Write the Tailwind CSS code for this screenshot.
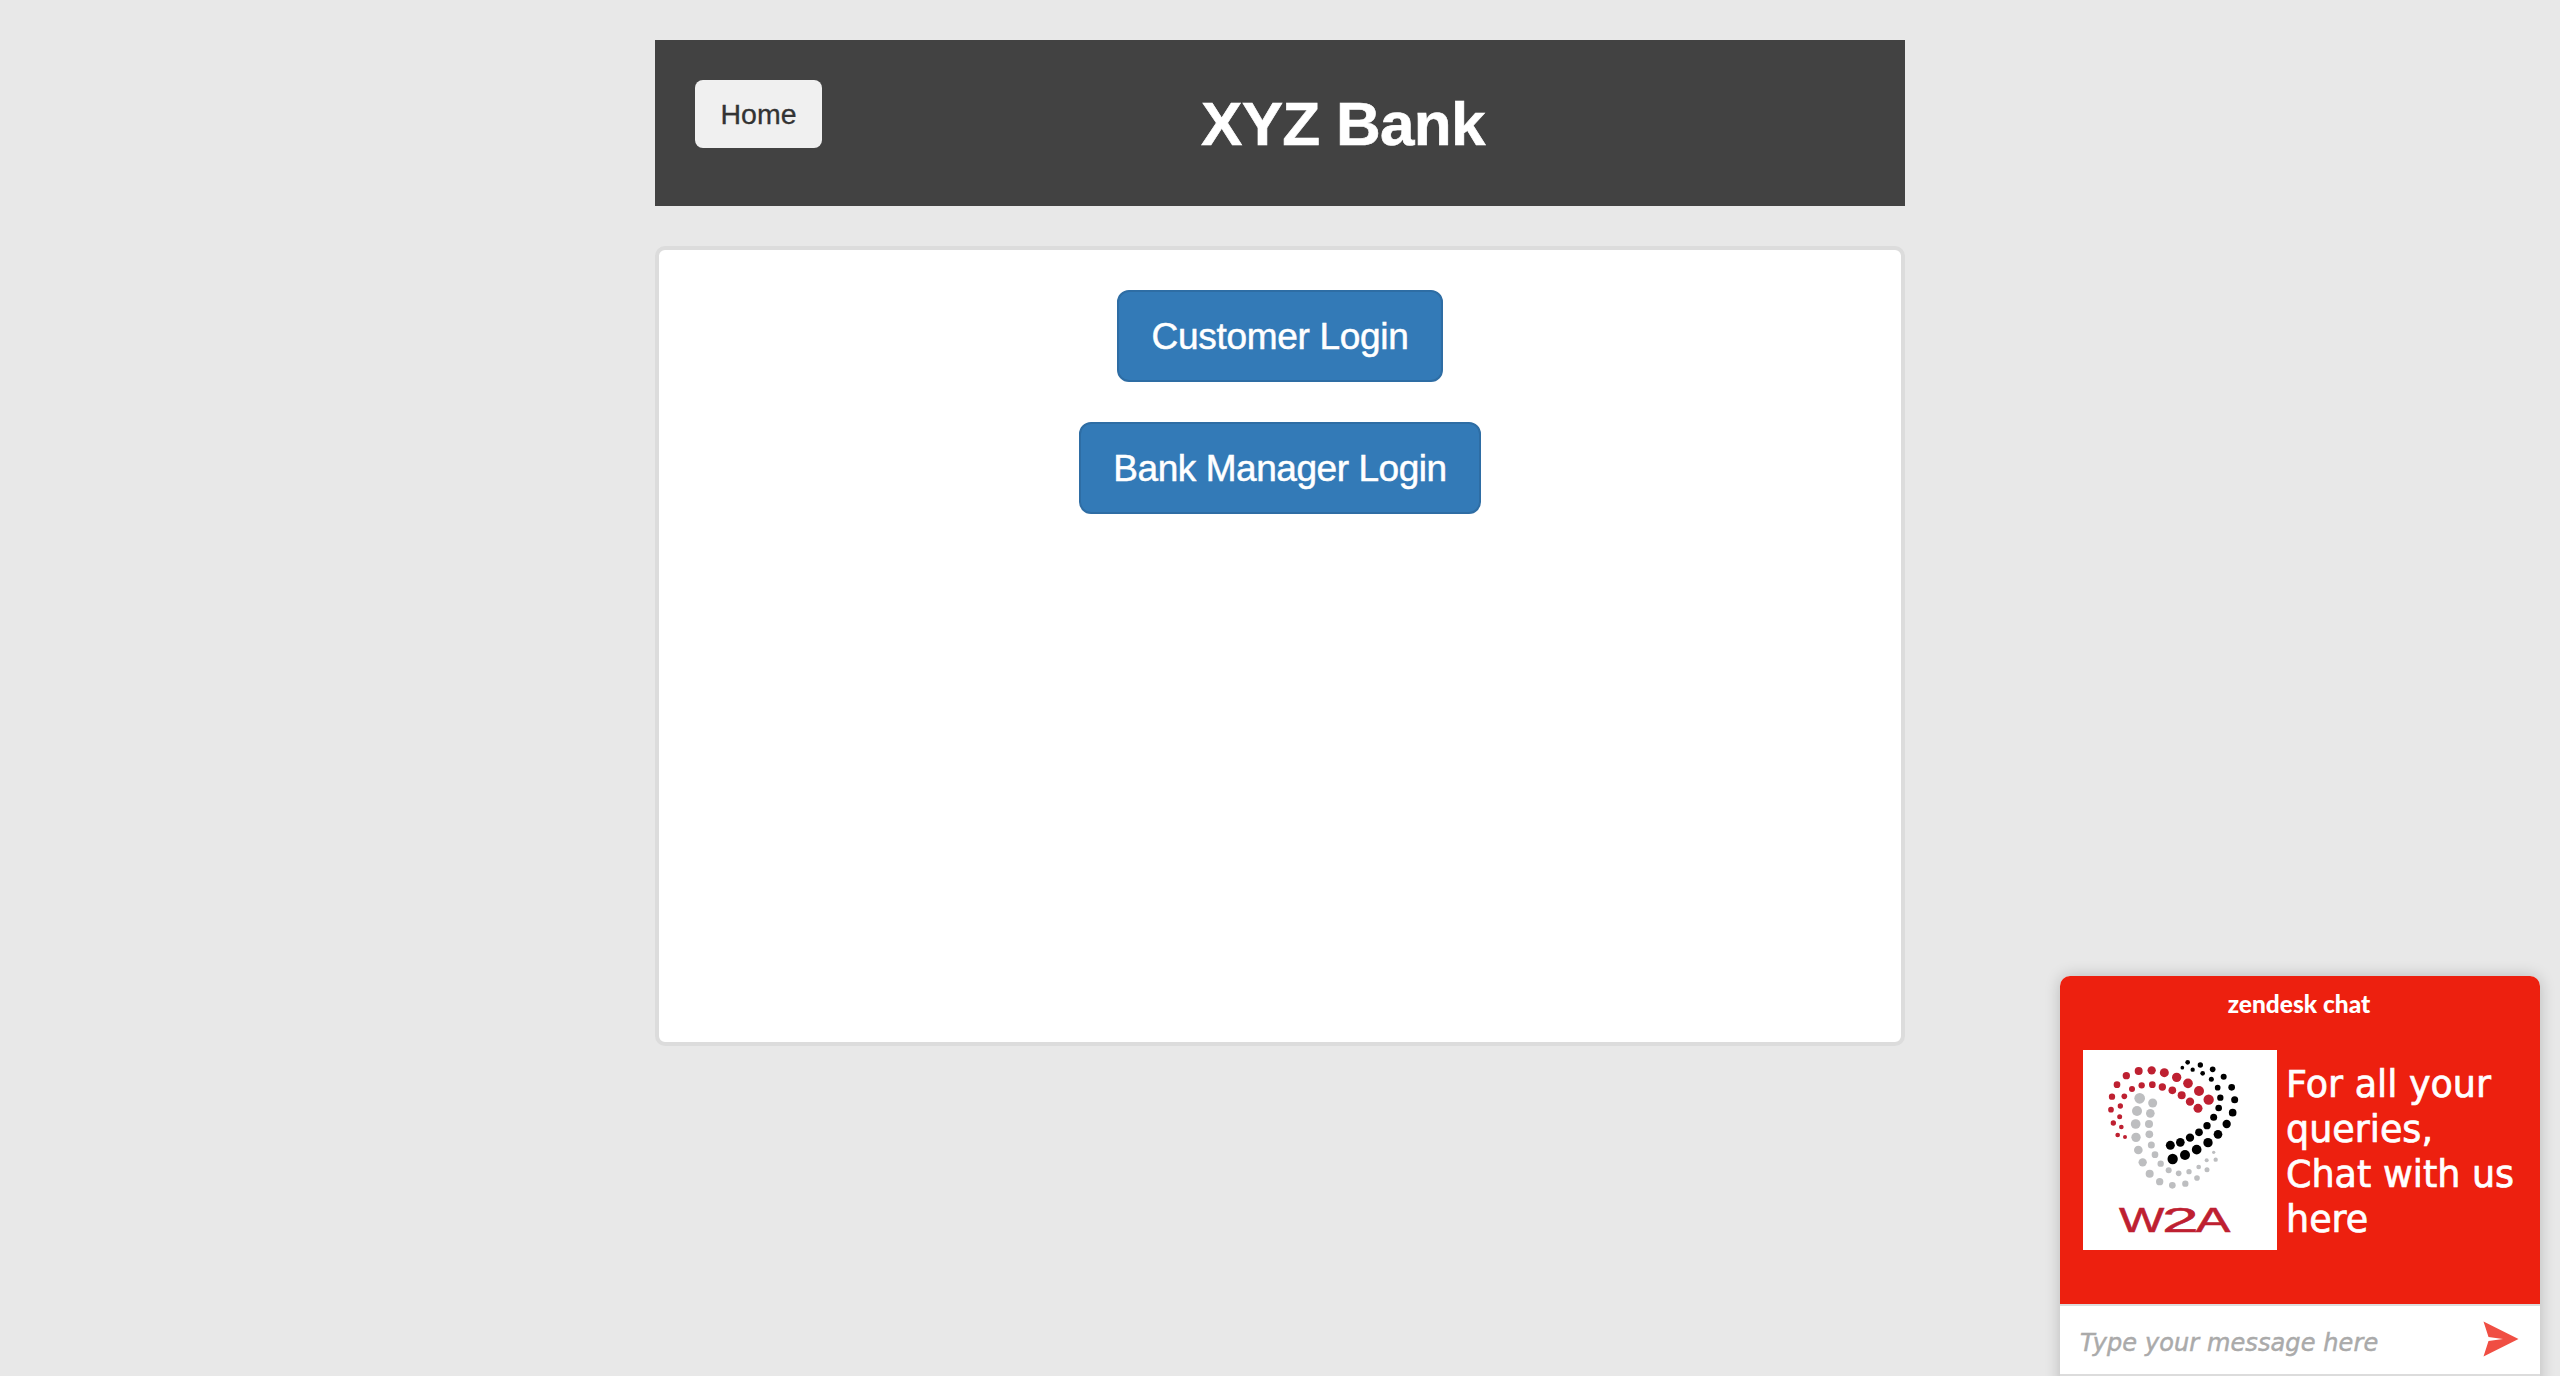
<!DOCTYPE html>
<html lang="en">
<head>
<meta charset="utf-8">
<title>XYZ Bank</title>
<script src="https://cdn.jsdelivr.net/npm/@tailwindcss/browser@4"></script>
</head>
<body class="h-screen overflow-hidden bg-[#e8e8e8] font-['Liberation_Sans',Arial,sans-serif]">
<main class="ml-[655px] flex w-[1250px] flex-col gap-10 pt-10">
  <header class="flex h-[166px] items-start bg-[#424242] pt-10 pl-10">
    <button class="h-[68px] w-[127px] rounded-lg bg-[#f0f0f0] pt-px text-[28.5px] leading-none text-[#333] [-webkit-text-stroke:0.3px_#333]">Home</button>
    <h1 class="ml-[379px] mt-[9px] text-[62px] leading-[70px] font-bold tracking-[-0.7px] whitespace-nowrap text-white [-webkit-text-stroke:0.6px_#fff]">XYZ Bank</h1>
  </header>
  <section class="flex h-[800px] flex-col items-center gap-10 rounded-[10px] border-4 border-[#dcdcdc] bg-white pt-10">
    <button class="h-[92px] w-[326px] shrink-0 rounded-xl border-2 border-[#2e6da4] bg-[#337ab7] text-[37px] leading-none tracking-[-0.3px] whitespace-nowrap text-white [-webkit-text-stroke:0.5px_#fff]">Customer Login</button>
    <button class="h-[92px] w-[402px] shrink-0 rounded-xl border-2 border-[#2e6da4] bg-[#337ab7] text-[37px] leading-none tracking-[-0.45px] whitespace-nowrap text-white [-webkit-text-stroke:0.5px_#fff]">Bank Manager Login</button>
  </section>
</main>

<aside class="fixed top-[976px] right-5 h-[420px] w-[480px] overflow-visible rounded-t-[10px] bg-white font-['DejaVu_Sans',Verdana,sans-serif] shadow-[0_0_16px_rgba(0,0,0,0.2)]">
  <div class="flex h-[328px] flex-col rounded-t-[10px] bg-[#ed200f]">
    <div class="h-[74px] pt-[11px] pr-0.5 text-center font-['Lato',sans-serif] text-[24.5px] leading-[34px] font-black text-white">zendesk chat</div>
    <div class="flex pl-[23px]">
      <svg class="h-[200px] w-[194px] shrink-0 bg-white" viewBox="9 15 582 600">
        <g fill="#be2031">
          <circle cx="386" cy="164" r="15.5"/><circle cx="357" cy="138" r="15"/><circle cx="324" cy="115" r="14.5"/><circle cx="290" cy="97" r="14"/><circle cx="253" cy="83" r="13.5"/><circle cx="215" cy="76" r="12.5"/><circle cx="176" cy="78" r="12"/><circle cx="139" cy="92" r="11"/><circle cx="111" cy="119" r="10"/><circle cx="96" cy="155" r="9.5"/><circle cx="93" cy="194" r="8.5"/><circle cx="100" cy="234" r="8"/><circle cx="113" cy="270" r="7"/>
          <circle cx="354" cy="190" r="13.5"/><circle cx="330" cy="170" r="12.5"/><circle cx="305" cy="151" r="12"/><circle cx="277" cy="136" r="11.5"/><circle cx="247" cy="126" r="11"/><circle cx="217" cy="119" r="10"/><circle cx="185" cy="121" r="9.5"/><circle cx="156" cy="132" r="9"/><circle cx="133" cy="154" r="8.5"/><circle cx="121" cy="183" r="8"/><circle cx="119" cy="215" r="7.5"/><circle cx="124" cy="246" r="7"/><circle cx="135" cy="276" r="6"/>
        </g>
        <g fill="#bdbec0">
          <circle cx="179" cy="160" r="16"/><circle cx="171" cy="198" r="15"/><circle cx="167" cy="237" r="14.5"/><circle cx="168" cy="277" r="14"/><circle cx="175" cy="315" r="13"/><circle cx="188" cy="352" r="12.5"/><circle cx="209" cy="386" r="12"/><circle cx="239" cy="410" r="11"/><circle cx="277" cy="421" r="10"/><circle cx="316" cy="416" r="9.5"/><circle cx="351" cy="399" r="8.5"/><circle cx="381" cy="374" r="7.5"/><circle cx="407" cy="344" r="6.5"/>
          <circle cx="218" cy="174" r="13.5"/><circle cx="211" cy="205" r="13"/><circle cx="207" cy="237" r="12"/><circle cx="208" cy="268" r="11.5"/><circle cx="214" cy="300" r="10.5"/><circle cx="225" cy="329" r="10"/><circle cx="242" cy="356" r="9.5"/><circle cx="266" cy="376" r="9"/><circle cx="296" cy="385" r="8.5"/><circle cx="327" cy="380" r="8"/><circle cx="356" cy="366" r="7"/><circle cx="380" cy="346" r="6"/><circle cx="401" cy="322" r="5"/>
        </g>
        <g fill="#000">
          <circle cx="278" cy="342" r="15.5"/><circle cx="315" cy="330" r="15"/><circle cx="350" cy="314" r="14.5"/><circle cx="384" cy="293" r="14"/><circle cx="414" cy="268" r="13"/><circle cx="440" cy="237" r="12.5"/><circle cx="458" cy="203" r="11.5"/><circle cx="464" cy="164" r="10.5"/><circle cx="455" cy="127" r="10"/><circle cx="431" cy="95" r="9"/><circle cx="398" cy="73" r="8.5"/><circle cx="361" cy="60" r="8"/><circle cx="323" cy="52" r="7"/>
          <circle cx="271" cy="301" r="13.5"/><circle cx="301" cy="292" r="13"/><circle cx="330" cy="278" r="12.5"/><circle cx="357" cy="262" r="11.5"/><circle cx="381" cy="242" r="11"/><circle cx="401" cy="217" r="10.5"/><circle cx="416" cy="189" r="10"/><circle cx="421" cy="158" r="9.5"/><circle cx="413" cy="128" r="8.5"/><circle cx="394" cy="103" r="7.5"/><circle cx="368" cy="85" r="7"/><circle cx="338" cy="74" r="6.5"/><circle cx="307" cy="68" r="5.5"/>
        </g>
        <g class="font-['Liberation_Sans',Arial,sans-serif] text-[104px]" fill="#be2031" stroke="#be2031" stroke-width="1.5">
          <text x="117" y="560" textLength="136" lengthAdjust="spacingAndGlyphs">W</text>
          <text x="246" y="560" textLength="110" lengthAdjust="spacingAndGlyphs">2</text>
          <text x="347" y="560" textLength="104" lengthAdjust="spacingAndGlyphs">A</text>
        </g>
      </svg>
      <p class="pt-3 pl-[9px] text-[36.5px] leading-[45px] whitespace-nowrap text-white [-webkit-text-stroke:0.7px_#fff]">For all your<br>queries,<br>Chat with us<br>here</p>
    </div>
  </div>
  <div class="flex h-[72px] items-center justify-between border-y-2 border-[#dcdcdc] bg-white pr-[21px] pl-5">
    <span class="pt-1.5 text-[24px] leading-8 tracking-[0.1px] whitespace-nowrap text-[#aaa] italic [-webkit-text-stroke:0.5px_#aaa]">Type your message here</span>
    <svg class="mb-0.5 h-[36px] w-[36px]" viewBox="0 0 36 36"><path fill="#f04e43" d="M0.5 0.5 L35.5 18 L0.5 35.5 L5.5 20 L20 18 L5.5 16 Z"/></svg>
  </div>
</aside>
</body>
</html>
